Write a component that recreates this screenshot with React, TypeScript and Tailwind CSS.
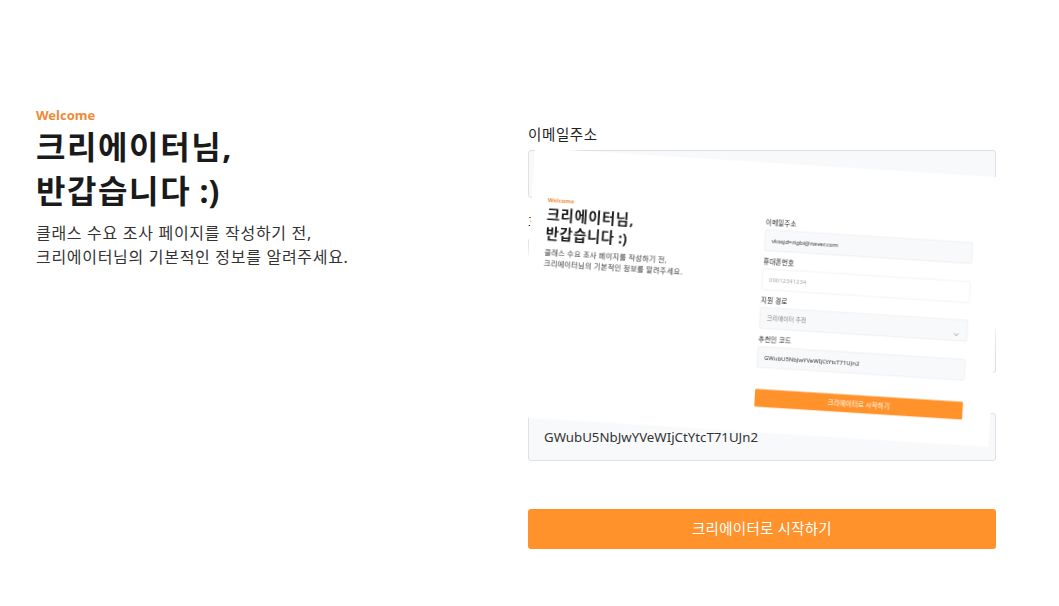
import React from "react";
import { ChevronDown } from "lucide-react";

const font = "font-['Noto_Sans','Noto_Sans_CJK_KR',sans-serif]";

const Field = ({ label, children }: { label: string; children: React.ReactNode }) => (
  <div className="flex flex-col">
    <label className="h-[27px] text-[14.5px] leading-[23px] tracking-[0.6px] text-[#222]">{label}</label>
    {children}
  </div>
);

const inputBox = "h-[48px] w-full rounded-[3px] border border-[#dfe1e5] px-[15px] text-[13.25px] outline-none";

const SignupPage = () => {
  return (
    <div className={`flex h-[606px] w-[1059px] bg-white ${font}`}>
      <div className="w-[528px] pl-9 pt-[106px]">
        <p className="text-[13px] leading-[18px] font-bold text-[#ef8a37]">Welcome</p>
        <h1 className="mt-[1px] text-[32px] leading-[44px] font-bold tracking-[1.6px] text-[#1a1a1a]">
          크리에이터님,
          <br />
          반갑습니다<span className="tracking-normal"> :)</span>
        </h1>
        <p className="mt-[8px] text-[16px] leading-[24px] tracking-[0.7px] text-[#333]">
          클래스 수요 조사 페이지를 작성하기 전,
          <br />
          크리에이터님의 기본적인 정보를 알려주세요.
        </p>
      </div>

      <div className="flex w-[468px] flex-col gap-[12.5px] pt-[123px]">
        <Field label="이메일주소">
          <input readOnly defaultValue="vkssjd=rigbi@naver.com" className={`${inputBox} bg-[#f8f9fb] text-[#333]`} />
        </Field>
        <Field label="휴대폰번호">
          <input readOnly placeholder="09012341234" className={`${inputBox} bg-white placeholder:text-[#aaa]`} />
        </Field>
        <Field label="지원 경로">
          <div className={`${inputBox} flex items-center justify-between bg-[#f8f9fb] text-[#888]`}>
            <span>크리에이터 추천</span>
            <ChevronDown size={18} className="mt-5 text-[#777]" />
          </div>
        </Field>
        <Field label="추천인 코드">
          <input readOnly defaultValue="GWubU5NbJwYVeWIjCtYtcT71UJn2" className={`${inputBox} bg-[#f8f9fb] text-[#333]`} />
        </Field>
        <button className="mt-[35.5px] h-[40px] w-full rounded-[3px] bg-[#ff922b] text-[14.5px] tracking-[0.25px] text-white">
          크리에이터로 시작하기
        </button>
      </div>
    </div>
  );
};

export default function App() {
  return (
    <div className="relative h-[606px] w-[1059px] overflow-hidden bg-white">
      <SignupPage />
      {/* capture preview flying over the form */}
      <div className="absolute top-[148px] left-[535px] origin-top-left [transform:rotate(3.6deg)_scale(0.445)] blur-[1.7px]">
        <SignupPage />
      </div>
    </div>
  );
}
